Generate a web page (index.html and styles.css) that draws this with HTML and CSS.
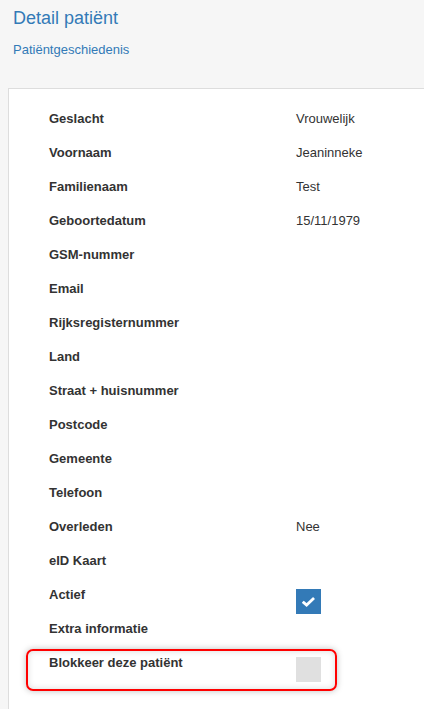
FILE: index.html
```html
<!DOCTYPE html>
<html lang="nl">
<head>
  <meta charset="UTF-8" />
  <meta name="viewport" content="width=device-width, initial-scale=1.0"/>
  <title>Detail patiënt</title>
  <link rel="stylesheet" href="styles.css">
</head>
<body>
  <header>
    <h1>Detail patiënt</h1>
    <a href="#">Patiëntgeschiedenis</a>
  </header>
  <main class="paneel">
    <div class="rij"><span class="label">Geslacht</span><span class="waarde">Vrouwelijk</span></div>
    <div class="rij"><span class="label">Voornaam</span><span class="waarde">Jeaninneke</span></div>
    <div class="rij"><span class="label">Familienaam</span><span class="waarde">Test</span></div>
    <div class="rij"><span class="label">Geboortedatum</span><span class="waarde">15/11/1979</span></div>
    <div class="rij"><span class="label">GSM-nummer</span><span class="waarde"></span></div>
    <div class="rij"><span class="label">Email</span><span class="waarde"></span></div>
    <div class="rij"><span class="label">Rijksregisternummer</span><span class="waarde"></span></div>
    <div class="rij"><span class="label">Land</span><span class="waarde"></span></div>
    <div class="rij"><span class="label">Straat + huisnummer</span><span class="waarde"></span></div>
    <div class="rij"><span class="label">Postcode</span><span class="waarde"></span></div>
    <div class="rij"><span class="label">Gemeente</span><span class="waarde"></span></div>
    <div class="rij"><span class="label">Telefoon</span><span class="waarde"></span></div>
    <div class="rij"><span class="label">Overleden</span><span class="waarde">Nee</span></div>
    <div class="rij"><span class="label">eID Kaart</span><span class="waarde"></span></div>
    <div class="rij">
      <span class="label">Actief</span>
      <span class="vinkje aan">
        <svg width="13" height="10" viewBox="0 0 13 10"><path d="M1.8 5.6 L4.6 8 L11 2" fill="none" stroke="#fff" stroke-width="2.8" stroke-linecap="square" stroke-linejoin="miter"/></svg>
      </span>
    </div>
    <div class="rij"><span class="label">Extra informatie</span><span class="waarde"></span></div>
    <div class="rij gemarkeerd">
      <span class="label">Blokkeer deze patiënt</span>
      <span class="vinkje"></span>
    </div>
  </main>
</body>
</html>
```

FILE: styles.css
```css
body {
  font-family: "Liberation Sans", Arial, sans-serif;
  font-size: 13px;
  color: #333;
  background: #f6f6f6;
  margin: 0;
  padding: 0;
}
header {
  padding: 7px 13px 0;
  height: 81px;
}
header h1 {
  margin: 0;
  font-size: 18px;
  font-weight: normal;
  line-height: 22px;
  color: #337ab7;
}
header a {
  display: block;
  margin-top: 11px;
  color: #337ab7;
  text-decoration: none;
  line-height: 20px;
}
.paneel {
  display: block;
  margin-left: 8px;
  min-height: 621px;
  box-sizing: border-box;
  background: white;
  border: 1px solid #ddd;
  border-right: none;
  border-bottom: none;
  padding: 20px 0 0 40px;
}
.rij {
  display: flex;
  height: 34px;
  line-height: 20px;
}
.label {
  width: 247px;
  font-weight: bold;
  flex-shrink: 0;
}
.waarde {
  color: #333;
}
.vinkje {
  width: 25px;
  height: 25px;
  margin-top: 4px;
  background: #e0e0e0;
  display: flex;
  align-items: center;
  justify-content: center;
}
.vinkje.aan {
  background: #337ab7;
}
.gemarkeerd {
  margin: -4px 0 -4px -23px;
  padding: 2px 14px 2px 21px;
  width: 311px;
  box-sizing: border-box;
  height: 42px;
  border: 2px solid #f00;
  border-radius: 7px;
  box-shadow: 0 0 6px rgba(0,0,0,0.25), inset 0 0 6px rgba(0,0,0,0.15);
}
```
